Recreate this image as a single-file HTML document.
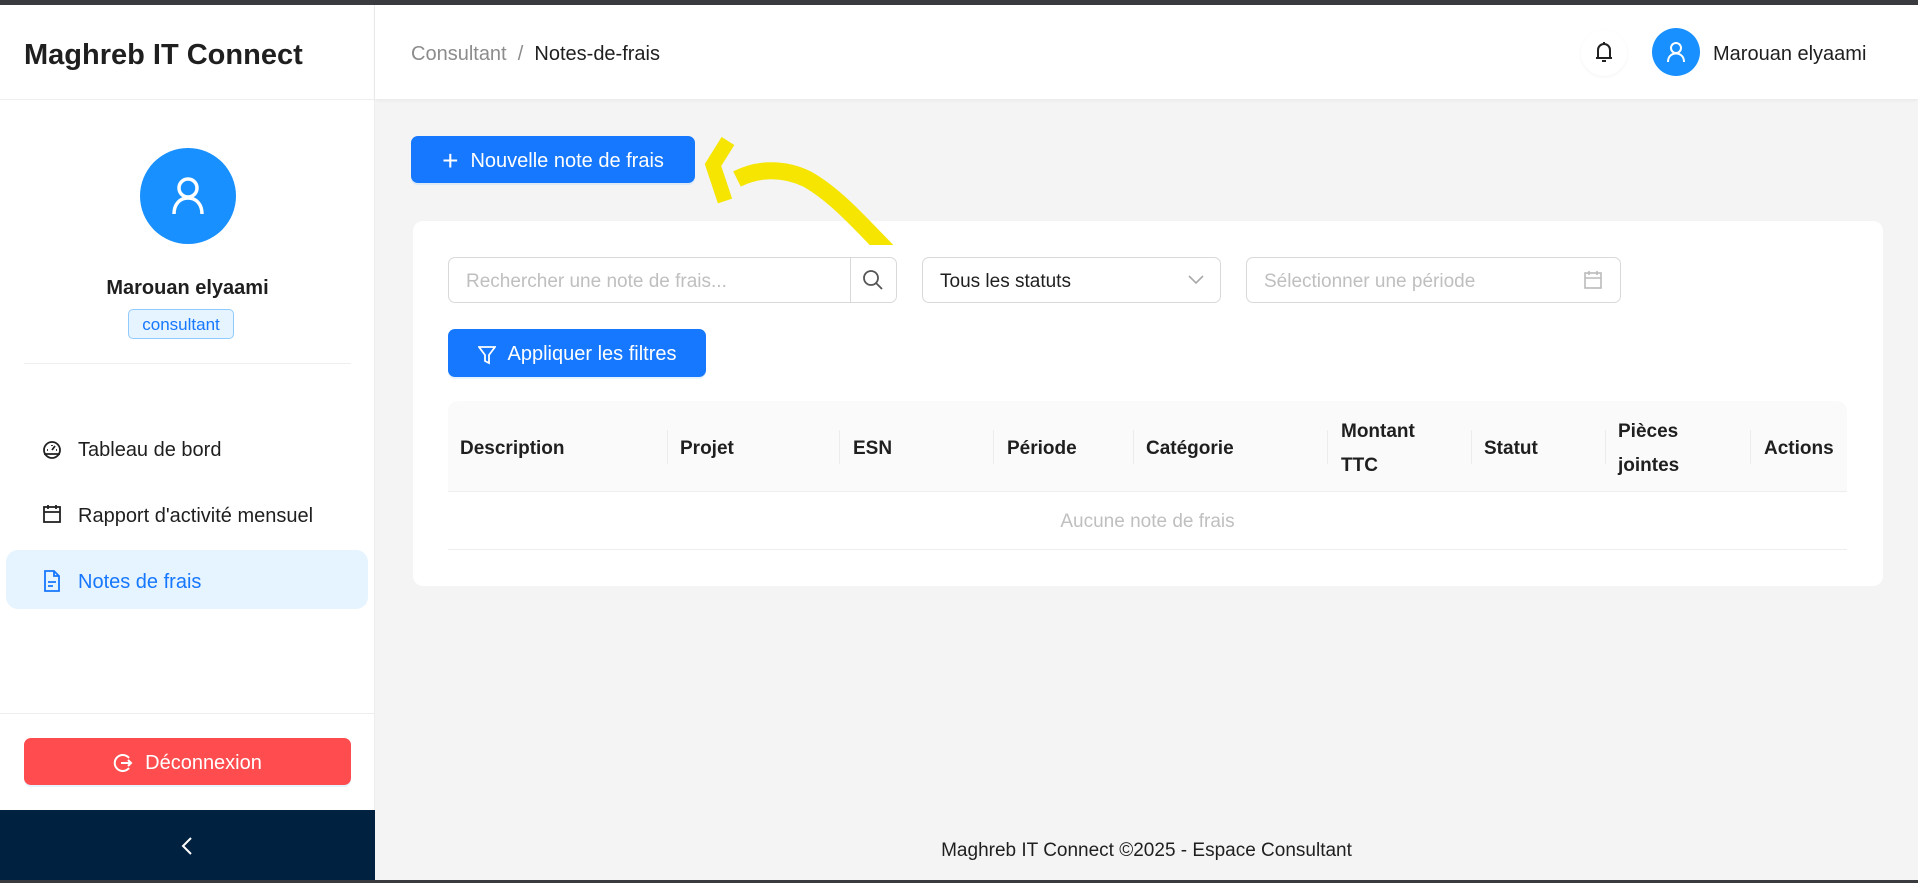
<!DOCTYPE html>
<html><head><meta charset="utf-8"><style>
*{box-sizing:border-box;margin:0;padding:0}
body{width:1918px;height:883px;overflow:hidden;background:#f4f4f4;font-family:"Liberation Sans",sans-serif;color:#1f1f1f;position:relative;font-size:19px}
.abs{position:absolute}
.topbar{left:0;top:0;width:1918px;height:5px;background:#3a3b3e}
.botbar{left:0;top:880px;width:1918px;height:3px;background:#3a3b3e}
.side{left:0;top:5px;width:375px;height:875px;background:#fff;border-right:1px solid #eee}
.header{left:375px;top:5px;width:1543px;height:94px;background:#fff;box-shadow:0 1px 4px rgba(0,0,0,.06)}
.btn{background:#1677ff;color:#fff;border-radius:7px;display:flex;align-items:center;justify-content:center;gap:12px;box-shadow:0 2px 0 rgba(5,145,255,.1)}
.inp{border:1px solid #d9d9d9;border-radius:7px;background:#fff;color:#bfbfbf;display:flex;align-items:center;padding-left:17px;padding-top:4px}
.th{top:403px;height:91px;display:flex;align-items:center;font-weight:bold;line-height:34px}
.dv{top:430px;width:1px;height:34px;background:#ececec}
.mi{left:78px;font-size:20px}
</style></head><body>
<div class="abs topbar"></div>
<div class="abs side"></div>
<div class="abs" style="left:0;top:99px;width:375px;height:1px;background:#eee"></div>
<div class="abs" style="left:24px;top:39px;font-size:29px;font-weight:bold;color:#1f1f1f">Maghreb IT Connect</div>
<div class="abs" style="left:140px;top:148px;width:96px;height:96px;border-radius:50%;background:#1890ff"></div>
<svg class="abs" style="left:164px;top:172px" width="48" height="48" viewBox="0 0 48 48" fill="none" stroke="#fff" stroke-width="3.5"><circle cx="24" cy="16" r="9"/><path d="M10 42c0-10 6-16 14-16s14 6 14 16"/></svg>
<div class="abs" style="left:0;width:375px;top:277px;text-align:center;font-weight:bold;font-size:20px">Marouan elyaami</div>
<div class="abs" style="left:128px;top:309px;width:106px;height:30px;border:1px solid #91caff;background:#e6f4ff;color:#1677ff;border-radius:5px;font-size:17px;text-align:center;line-height:30px">consultant</div>
<div class="abs" style="left:24px;top:363px;width:327px;height:1px;background:#eee"></div>
<svg class="abs" style="left:42px;top:440px" width="20" height="20" viewBox="0 0 20 20" fill="none" stroke="#222" stroke-width="1.8"><circle cx="10" cy="10" r="8"/><path d="M10 10l3-4M5 10h1M14 10h1M10 5v1M2 14h16"/></svg>
<div class="abs mi" style="top:439px">Tableau de bord</div>
<svg class="abs" style="left:42px;top:504px" width="20" height="20" viewBox="0 0 20 20" fill="none" stroke="#222" stroke-width="1.8"><rect x="2" y="3" width="16" height="15"/><path d="M2 8h16M6 1v4M14 1v4"/></svg>
<div class="abs mi" style="top:505px">Rapport d'activité mensuel</div>
<div class="abs" style="left:6px;top:550px;width:362px;height:59px;background:#e6f4ff;border-radius:12px"></div>
<svg class="abs" style="left:42px;top:570px" width="20" height="22" viewBox="0 0 20 22" fill="none" stroke="#1677ff" stroke-width="1.8"><path d="M3 1h9l5 5v15H3z M12 1v5h5 M6 12h8M6 16h5"/></svg>
<div class="abs mi" style="top:571px;color:#1677ff">Notes de frais</div>
<div class="abs" style="left:0;top:713px;width:375px;height:1px;background:#eee"></div>
<div class="abs btn" style="left:24px;top:738px;width:327px;height:47px;background:#ff4d4f;font-size:20px;padding-top:3px"><svg width="20" height="20" viewBox="0 0 20 20" fill="none" stroke="#fff" stroke-width="2"><path d="M16 5A8 8 0 1 0 16 15M8 10h10M15 7l3 3-3 3"/></svg>Déconnexion</div>
<div class="abs" style="left:0;top:810px;width:375px;height:70px;background:#002140"></div>
<svg class="abs" style="left:179px;top:836px" width="16" height="20" viewBox="0 0 16 20" fill="none" stroke="#fff" stroke-width="2"><path d="M12 2L4 10l8 8"/></svg>

<div class="abs header"></div>
<div class="abs" style="left:411px;top:43px;font-size:20px;color:#8c8c8c">Consultant&nbsp;&nbsp;/&nbsp;&nbsp;<span style="color:#1f1f1f">Notes-de-frais</span></div>
<div class="abs" style="left:1581px;top:30px;width:46px;height:46px;border-radius:50%;box-shadow:0 1px 3px rgba(0,0,0,.05)"></div>
<svg class="abs" style="left:1594px;top:40px" width="20" height="24" viewBox="0 0 20 24" fill="none" stroke="#222" stroke-width="2"><path d="M4 18V10a6 6 0 0 1 12 0v8M2 18h16M8 21h4M10 2v2"/></svg>
<div class="abs" style="left:1652px;top:28px;width:48px;height:48px;border-radius:50%;background:#1890ff"></div>
<svg class="abs" style="left:1664px;top:40px" width="24" height="24" viewBox="0 0 48 48" fill="none" stroke="#fff" stroke-width="4"><circle cx="24" cy="16" r="10"/><path d="M8 44c0-11 7-17 16-17s16 6 16 17"/></svg>
<div class="abs" style="left:1713px;top:43px;font-size:20px">Marouan elyaami</div>

<div class="abs btn" style="left:411px;top:136px;width:284px;height:47px;font-size:20px;padding-top:3px"><span style="font-size:28px;font-weight:300;line-height:20px">+</span>Nouvelle note de frais</div>

<div class="abs" style="left:413px;top:221px;width:1470px;height:365px;background:#fff;border-radius:10px"></div>
<svg class="abs" style="left:700px;top:135px" width="200" height="110" viewBox="0 0 200 110" fill="none" stroke="#f5e500" stroke-width="15"><path d="M28 6L13 30l12 36"/><path d="M37 44c20-10 45-12 70 0 25 14 45 35 86 78" stroke-width="17"/></svg>
<div class="abs inp" style="left:448px;top:257px;width:449px;height:46px;font-size:19px">Rechercher une note de frais...</div>
<div class="abs" style="left:850px;top:258px;width:1px;height:44px;background:#d9d9d9"></div>
<svg class="abs" style="left:862px;top:269px" width="22" height="22" viewBox="0 0 22 22" fill="none" stroke="#555" stroke-width="1.8"><circle cx="9" cy="9" r="7"/><path d="M14 14l6 6"/></svg>
<div class="abs inp" style="left:922px;top:257px;width:299px;height:46px;color:#1f1f1f">Tous les statuts</div>
<svg class="abs" style="left:1188px;top:273px" width="16" height="12" viewBox="0 0 16 12" fill="none" stroke="#aaa" stroke-width="1.6"><path d="M1 3l7 7 7-7"/></svg>
<div class="abs inp" style="left:1246px;top:257px;width:375px;height:46px">Sélectionner une période</div>
<svg class="abs" style="left:1584px;top:270px" width="18" height="19" viewBox="0 0 18 19" fill="none" stroke="#bbb" stroke-width="1.6"><rect x="1" y="3" width="16" height="15"/><path d="M1 8h16M5 1v4M13 1v4"/></svg>
<div class="abs btn" style="left:448px;top:329px;width:258px;height:48px;font-size:20px;padding-top:3px"><svg width="18" height="20" viewBox="0 0 18 20" fill="none" stroke="#fff" stroke-width="1.8"><path d="M1 2h16l-6 8v8l-4-2v-6z"/></svg>Appliquer les filtres</div>

<div class="abs" style="left:448px;top:401px;width:1399px;height:91px;background:#fafafa;border-radius:10px 10px 0 0;border-bottom:1px solid #eee"></div>
<div class="abs th" style="left:460px">Description</div>
<div class="abs th" style="left:680px">Projet</div>
<div class="abs th" style="left:853px">ESN</div>
<div class="abs th" style="left:1007px">Période</div>
<div class="abs th" style="left:1146px">Catégorie</div>
<div class="abs th" style="left:1341px">Montant<br>TTC</div>
<div class="abs th" style="left:1484px">Statut</div>
<div class="abs th" style="left:1618px">Pièces<br>jointes</div>
<div class="abs th" style="left:1764px">Actions</div>
<div class="abs dv" style="left:667px"></div><div class="abs dv" style="left:839px"></div><div class="abs dv" style="left:993px"></div><div class="abs dv" style="left:1133px"></div><div class="abs dv" style="left:1327px"></div><div class="abs dv" style="left:1471px"></div><div class="abs dv" style="left:1605px"></div><div class="abs dv" style="left:1750px"></div>
<div class="abs" style="left:448px;top:511px;width:1399px;text-align:center;color:#bfbfbf">Aucune note de frais</div>
<div class="abs" style="left:448px;top:549px;width:1399px;height:1px;background:#eee"></div>

<div class="abs" style="left:375px;width:1543px;top:840px;text-align:center;font-size:19px">Maghreb IT Connect ©2025 - Espace Consultant</div>
<div class="abs botbar"></div>
</body></html>
